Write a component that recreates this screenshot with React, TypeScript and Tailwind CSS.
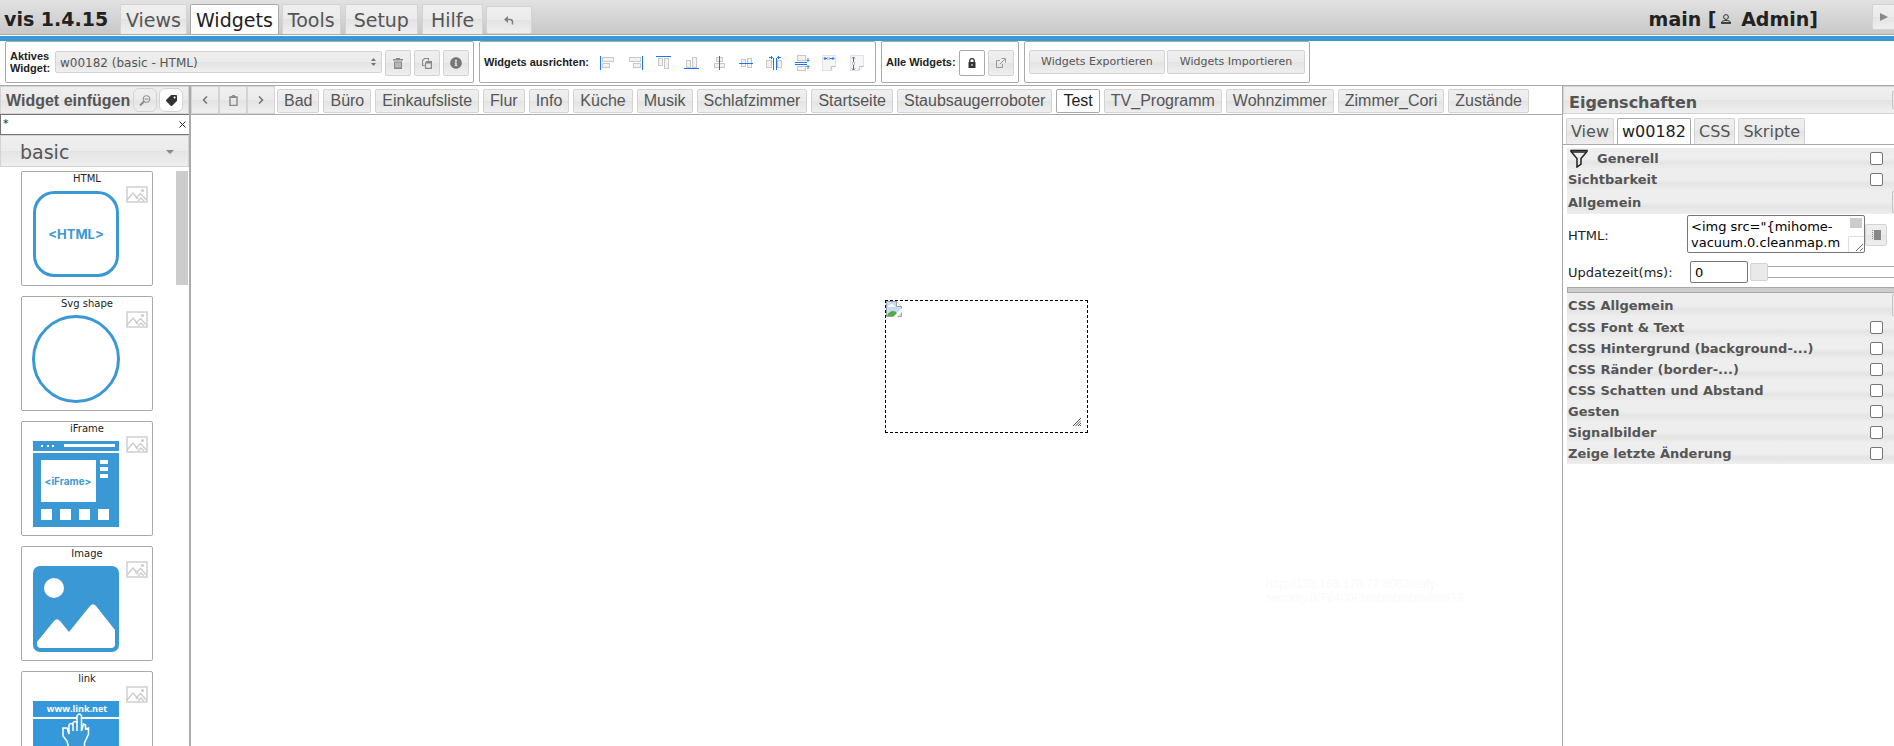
import React from 'react';
import { FaInfoCircle, FaTag } from 'react-icons/fa';

const glass = 'border border-[#d3d3d3] bg-[linear-gradient(#efefef,#ebebeb_50%,#e3e3e3_50%,#efefef)] text-[#555555]';
const active = 'border border-[#aaaaaa] bg-white text-[#212121]';

const viewNames = [
  'Bad', 'Büro', 'Einkaufsliste', 'Flur', 'Info', 'Küche', 'Musik', 'Schlafzimmer', 'Startseite',
  'Staubsaugerroboter', 'Test', 'TV_Programm', 'Wohnzimmer', 'Zimmer_Cori', 'Zustände',
];

const cssGroups = [
  'CSS Font & Text', 'CSS Hintergrund (background-...)', 'CSS Ränder (border-...)',
  'CSS Schatten und Abstand', 'Gesten', 'Signalbilder', 'Zeige letzte Änderung',
];

/* Toolbar icons */
const UndoIcon = () => (
  <svg width="10" height="9" viewBox="0 0 10 9" fill="none" stroke="#808080" strokeWidth="1.5">
    <path d="M3.5 3.5H6a2.5 2.5 0 0 1 2.5 2.5v2.5" />
    <path d="M4 0 0 3.5 4 7z" fill="#808080" stroke="none" />
  </svg>
);

const TrashIcon = () => (
  <svg width="10" height="11" viewBox="0 0 10 11" fill="#888888">
    <path d="M0 1h3V0h4v1h3v1.5H0z" />
    <path fillRule="evenodd" d="M1 3.5h8V11H1zM2.5 4.5v5h1v-5zm2 0v5h1v-5zm2 0v5h1v-5z" />
  </svg>
);

const CopyIcon = () => (
  <svg width="10" height="11" viewBox="0 0 10 11" fill="none" stroke="#888888" strokeWidth="1.2">
    <path d="M2.5 7.5h-2v-5l2-2h4v2" />
    <path d="M3.5 5.5 5 3.5h4.4v6.9H3.5z" />
    <path d="M3.5 4.5h6" strokeWidth="2" />
  </svg>
);

const ClipboardIcon = () => (
  <svg width="9" height="11" viewBox="0 0 9 11" fill="none" stroke="#888888">
    <path d="M1 2h7v8.4H1z" strokeWidth="1.4" />
    <path d="M2.5 2.5v-1h1v-1h2v1h1v1z" fill="#888888" />
  </svg>
);

const Chevron = ({ right }: { right?: boolean }) => (
  <svg width="6" height="8" viewBox="0 0 6 8" fill="none" stroke="#777777" strokeWidth="1.6">
    <path d={right ? 'M1 .5 4.5 4 1 7.5' : 'M5 .5 1.5 4 5 7.5'} />
  </svg>
);

const ZoomIcon = () => (
  <svg width="12" height="11" viewBox="0 0 12 11" fill="none" stroke="#888888">
    <circle cx="7.5" cy="4" r="3.4" />
    <path d="M5.5 4h4" />
    <path d="m5 6.5-4 4" strokeWidth="1.8" />
  </svg>
);

const LockIcon = () => (
  <svg width="8" height="10" viewBox="0 0 8 10">
    <path d="M1.8 5V2.8a2.2 2.2 0 0 1 4.4 0V5" fill="none" stroke="#333333" strokeWidth="1.4" />
    <path fillRule="evenodd" d="M.5 4h7v6h-7zM3.5 6v2h1V6z" fill="#333333" />
  </svg>
);

const ExternalIcon = () => (
  <svg width="10" height="10" viewBox="0 0 10 10" fill="none" stroke="#999999">
    <path d="M4 2.5H.5v7h6V6" />
    <path d="M4 6 9 1M5.5.5h4v4" />
  </svg>
);

const PersonIcon = () => (
  <svg width="10" height="10" viewBox="0 0 10 10" fill="none" stroke="#333333">
    <circle cx="5" cy="3" r="2.4" />
    <path d="M.5 9c0-2 2-2.5 4.5-2.5S9.5 7 9.5 9z" />
    <path d="M0 9h10" strokeWidth="1.6" />
  </svg>
);

const grey = { fill: '#f2f2f2', stroke: '#c8c8c8' };
const blue = { stroke: '#1f74ea', fill: 'none' };

const alignIcons: { title: string; icon: React.ReactNode }[] = [
  { title: 'Links', icon: <><rect x="2.5" y="2.5" width="11" height="4" {...grey} /><rect x="2.5" y="8.5" width="7" height="4" {...grey} /><path d="M.5 1v14" {...blue} /></> },
  { title: 'Rechts', icon: <><rect x="1.5" y="2.5" width="11" height="4" {...grey} /><rect x="5.5" y="8.5" width="7" height="4" {...grey} /><path d="M14.5 1v14" {...blue} /></> },
  { title: 'Oben', icon: <><rect x="3.5" y="3.5" width="4" height="7" {...grey} /><rect x="9.5" y="3.5" width="4" height="10" {...grey} /><path d="M1 1.5h15" {...blue} /></> },
  { title: 'Unten', icon: <><rect x="3.5" y="5.5" width="4" height="7" {...grey} /><rect x="9.5" y="2.5" width="4" height="10" {...grey} /><path d="M1 13.5h15" {...blue} /></> },
  { title: 'Mitte horizontal', icon: <><rect x="5.5" y="2.5" width="6" height="4" {...grey} /><rect x="3.5" y="8.5" width="10" height="4" {...grey} /><path d="M8.5 1v14" {...blue} /></> },
  { title: 'Mitte vertikal', icon: <><rect x="3.5" y="4.5" width="4" height="7" {...grey} /><rect x="9.5" y="3.5" width="4" height="9" {...grey} /><path d="M1 8.5h14" {...blue} /></> },
  { title: 'Abstand horizontal', icon: <><rect x=".5" y="5.5" width="5" height="7" {...grey} /><rect x="11.5" y="5.5" width="4" height="7" {...grey} /><path d="M7.500 3v12M10.500 3v12M3 2.500h3.500M15 2.500h-3.500M5 1l1.500 1.500L5 4M13 1l-1.500 1.500L13 4" {...blue} /></> },
  { title: 'Abstand vertikal', icon: <><rect x="3.5" y=".5" width="8" height="5" {...grey} /><rect x="3.5" y="11.5" width="8" height="4" {...grey} /><path d="M1 7.5h12M1 9.5h12M14 3v3M14 14v-3M12.5 5 14 6.5 15.5 5M12.5 12l1.500-1.500 1.500 1.500" {...blue} /></> },
  { title: 'Gleiche Breite', icon: <><path d="M1.5.5h13v11l-4 4h-9z" fill="#f6f6f6" stroke="#e2e2e2" /><path d="m10 15.5.5-4h4" fill="white" stroke="#bbbbbb" /><path d="M3 3.5h3M9 3.5h4M4.5 2 3 3.500 4.5 5M11.5 2 13 3.5 11.5 5" {...blue} /><rect x="6.5" y="2.5" width="2" height="2" {...grey} /></> },
  { title: 'Gleiche Höhe', icon: <><path d="M1.5.5h13v11l-4 4h-9z" fill="#f6f6f6" stroke="#e2e2e2" /><path d="m10 15.5.5-4h4" fill="white" stroke="#bbbbbb" /><path d="M4.5 2v5M4.5 10v5M3 3.5 4.5 2 6 3.5M3 13.5 4.5 15 6 13.5" {...blue} /><rect x="3.5" y="7.5" width="2" height="2" {...grey} /></> },
];

/* Palette drawings */
const widgets: { name: string; drawing: React.ReactNode }[] = [
  {
    name: 'HTML',
    drawing: (
      <>
        <rect x="1.5" y="1.5" width="83" height="83" rx="20" fill="none" stroke="#3a98d5" strokeWidth="3" />
        <text x="43" y="48" textAnchor="middle" fontFamily="Inter, sans-serif" fontWeight="700" fontSize="13" fill="#3a98d5">&lt;HTML&gt;</text>
      </>
    ),
  },
  { name: 'Svg shape', drawing: <circle cx="43" cy="43" r="42.5" fill="none" stroke="#3a98d5" strokeWidth="3" /> },
  {
    name: 'iFrame',
    drawing: (
      <>
        <path d="M0 0h86v10H0zM0 12h86v74H0z" fill="#3a98d5" />
        <path d="M8 4h2v2H8zM14 4h2v2h-2zM19 4h2v2h-2zM31 3h51v3H31zM8 19h55v42H8zM67 19h8v4h-8zM67 26h8v4h-8zM67 33h8v4h-8zM8 68h11v11H8zM27 68h11v11H27zM46 68h11v11H46zM65 68h11v11H65z" fill="white" />
        <text x="35" y="44" textAnchor="middle" fontFamily="Inter, sans-serif" fontWeight="700" fontSize="10" fill="#3a98d5">&lt;iFrame&gt;</text>
      </>
    ),
  },
  {
    name: 'Image',
    drawing: (
      <>
        <rect width="86" height="86" rx="7" fill="#3a98d5" />
        <circle cx="21" cy="22" r="10" fill="white" />
        <path d="M4 76 21 55q3-3.5 6 0l9 11 21-26q3-3.500 6 0l19 24v14q0 4-4 4H8q-4 0-4-4z" fill="white" />
      </>
    ),
  },
  {
    name: 'link',
    drawing: (
      <>
        <path d="M0 0h86v16H0zM0 18h86v68H0z" fill="#3498db" />
        <text x="44" y="11" textAnchor="middle" fontFamily="'Open Sans', sans-serif" fontWeight="700" fontSize="9" fill="white">www.link.net</text>
        <path d="M36 48 34 40 30 35V27h4l2 6V24q2-3 4 0v6-8q2-3 4 0v8V15q2.5-4 4.5 0v15l2-7 2 1v4l3-1v6l-4 9v6z" fill="#3a98d5" stroke="white" strokeWidth="1.5" />
      </>
    ),
  },
];

const PreviewIcon = () => (
  <svg width="22" height="17" viewBox="0 0 22 17" fill="none" stroke="#cccccc">
    <rect x="1" y="1" width="20" height="15" strokeWidth="1.4" />
    <path d="m1 14 6-7 5 6M9.5 10.5l1.5 2.5M11 11l3.5-3.5 6 6.500M12 15l3-3 3 3" strokeWidth="1.4" />
    <circle cx="16.5" cy="4.5" r="1.6" fill="#cccccc" stroke="none" />
  </svg>
);

const TopTab = ({ label, selected }: { label: string; selected?: boolean }) => (
  <button className={`h-[30px] shrink-0 rounded-t-xs px-[5px] text-[19px] leading-6 ${selected ? active : glass} border-b-0`}>{label}</button>
);

const SquareButton = ({ label, selected, children }: { label: string; selected?: boolean; children: React.ReactNode }) => (
  <button aria-label={label} title={label} className={`mt-[2px] flex size-[26px] shrink-0 items-center justify-center rounded-xs ${selected ? active : glass}`}>
    {children}
  </button>
);

const rowBg = 'bg-[linear-gradient(#eeeeee_50%,#e4e4e4_70%,#eeeeee)]';

const GroupRow = ({ label, filter }: { label: string; filter?: boolean }) => (
  <label className={`flex h-[21px] items-center pr-[11px] pl-px ${rowBg}`}>
    {filter && (
      <svg className="mr-[9px] ml-[2px]" width="18" height="19" viewBox="0 0 18 19" fill="none" stroke="#222222" strokeWidth="1.5">
        <path d="M1 1.5h16v1l-6 7v5.5l-4 3V9.5l-6-7z" />
        <path d="M2 3h14" />
      </svg>
    )}
    <span className="flex-1 pt-px font-bold">{label}</span>
    <input type="checkbox" className="size-[13px] appearance-none rounded-xs border border-[#767676] bg-white" />
  </label>
);

const GroupHeader = ({ label }: { label: string }) => (
  <div className={`flex h-6 items-center justify-between pl-px font-bold ${rowBg}`}>
    <h3 className="pt-px">{label}</h3>
    <span className="h-[22px] w-[2px] rounded-l-xs border border-r-0 border-[#c5c5c5]" />
  </div>
);

const App: React.FC = () => {
  return (
    <div className="flex h-screen flex-col overflow-hidden bg-white font-['DejaVu_Sans',sans-serif] text-[13px] text-[#222222]">
      {/* Menu */}
      <header className="flex h-[35px] shrink-0 items-end border-b border-[#aaaaaa] bg-linear-to-b from-[#e2e2e2] to-[#c8c8c8] pl-1">
        <h1 className="w-[116px] shrink-0 pb-[3px] text-[19px] leading-6 font-bold">vis 1.4.15</h1>
        <nav className="flex items-end gap-[3px]">
          <TopTab label="Views" />
          <TopTab label="Widgets" selected />
          <TopTab label="Tools" />
          <button className={`ml-px h-[30px] rounded-t-xs border-b-0 px-2 text-[19px] leading-7 ${glass}`}>Setup</button>
          <button className={`ml-px h-[30px] rounded-t-xs border-b-0 px-2 text-[19px] leading-7 ${glass}`}>Hilfe</button>
          <button aria-label="Rückgängig" className={`flex h-7 w-[46px] items-center justify-center rounded-xs ${glass}`}>
            <UndoIcon />
          </button>
        </nav>
        <div className="ml-auto flex items-center self-start pt-[3px]">
          <span className="mr-[54px] flex items-center pt-1 text-[19px] leading-6 font-bold whitespace-pre">
            main [<span className="mx-1"><PersonIcon /></span> Admin]
          </span>
          <button aria-label="Ausführen" className={`flex h-[26px] w-[22px] items-center justify-center rounded-l-xs border-r-0 ${glass}`}>
            <svg width="8" height="8" viewBox="0 0 8 8"><path d="M0 0 8 4 0 8z" fill="#888888" /></svg>
          </button>
        </div>
      </header>
      <div className="mt-px h-[5px] shrink-0 bg-[#3a98d5]" />

      {/* Toolbar */}
      <div className="flex h-[44px] shrink-0 items-start gap-[5px] pl-[5px]">
        <div className="flex h-[42px] w-[469px] items-center gap-[3px] rounded-xs border border-[#aaaaaa] px-1">
          <label htmlFor="active-widget" className="w-[42px] shrink-0 font-['Liberation_Sans',sans-serif] text-[11px] leading-3 font-bold">Aktives Widget:</label>
          <div className="relative min-w-0 flex-1">
            <select id="active-widget" className={`block h-[22px] w-full appearance-none rounded-xs px-1 pt-px text-[12px] ${glass}`}>
              <option>w00182 (basic - HTML)</option>
            </select>
            <svg className="pointer-events-none absolute top-[7px] right-[6px]" width="5" height="8" viewBox="0 0 5 8" fill="#777777">
              <path d="M0 3 2.5 0 5 3zM0 5l2.5 3L5 5z" />
            </svg>
          </div>
          <SquareButton label="Löschen"><TrashIcon /></SquareButton>
          <SquareButton label="Kopieren"><CopyIcon /></SquareButton>
          <SquareButton label="Info"><FaInfoCircle size={12} color="#777777" /></SquareButton>
        </div>
        <div className="flex h-[42px] w-[397px] items-center rounded-xs border border-[#aaaaaa] px-1">
          <span className="w-[110px] shrink-0 font-['Liberation_Sans',sans-serif] text-[11px] font-bold whitespace-nowrap">Widgets ausrichten:</span>
          <div className="flex flex-1 justify-between pt-[2px] pr-[6px] pl-[6px]">
            {alignIcons.map(({ title, icon }) => (
              <button key={title} title={title} aria-label={title}>
                <svg width="16" height="16" viewBox="0 0 16 16">{icon}</svg>
              </button>
            ))}
          </div>
        </div>
        <div className="flex h-[42px] w-[138px] items-center gap-[3px] rounded-xs border border-[#aaaaaa] px-1">
          <span className="flex-1 font-['Liberation_Sans',sans-serif] text-[11px] font-bold whitespace-nowrap">Alle Widgets:</span>
          <SquareButton label="Sperren" selected><LockIcon /></SquareButton>
          <SquareButton label="Exportieren"><ExternalIcon /></SquareButton>
        </div>
        <div className="flex h-[42px] items-center gap-[2px] rounded-xs border border-[#aaaaaa] px-1">
          <button className={`h-6 rounded-xs px-[11px] pt-px text-[11px] ${glass}`}>Widgets Exportieren</button>
          <button className={`h-6 rounded-xs px-3 pt-px text-[11px] ${glass}`}>Widgets Importieren</button>
        </div>
      </div>

      <div className="flex min-h-0 flex-1 border-t border-[#aaaaaa]">
        {/* Widget palette */}
        <aside className="flex w-[191px] shrink-0 flex-col border-r-2 border-[#aaaaaa]">
          <div className={`flex h-7 shrink-0 items-center pl-[5px] ${glass}`}>
            <h2 className="w-[127px] shrink-0 pt-px font-['Liberation_Sans',sans-serif] text-[16px] font-bold whitespace-nowrap">Widget einfügen</h2>
            <button aria-label="Filter" className={`flex size-6 items-center justify-center rounded-md ${glass}`}><ZoomIcon /></button>
            <button aria-label="Typen" className="ml-[2px] flex size-6 items-center justify-center rounded-md border border-[#d3d3d3] bg-white">
              <FaTag size={11} color="#333333" className="-scale-x-100" />
            </button>
          </div>
          <div className="flex h-[21px] shrink-0 items-center border border-r-0 border-[#767676] pr-[3px]">
            <input aria-label="Suche" defaultValue="*" className="min-w-0 flex-1 px-[2px] text-[11px] outline-none" />
            <button aria-label="Leeren">
              <svg width="7" height="7" viewBox="0 0 7 7" stroke="#222222"><path d="m.5.5 6 6m0-6-6 6" /></svg>
            </button>
          </div>
          <button className={`flex h-8 shrink-0 items-center justify-between pt-[2px] pr-[14px] pl-[19px] text-[19px] ${glass}`}>
            basic
            <svg width="8" height="4" viewBox="0 0 8 4"><path d="M0 0h8L4 4z" fill="#888888" /></svg>
          </button>
          <div className="flex min-h-0 flex-1 justify-between pt-1 pr-px pl-[21px]">
            <ul className="flex flex-col gap-[10px] overflow-hidden">
              {widgets.map(({ name, drawing }) => (
                <li key={name} className="h-[115px] w-[132px] shrink-0 rounded-xs border border-[#aaaaaa]">
                  <p className="h-[14px] text-center text-[10px] leading-[14px]">{name}</p>
                  <div className="flex justify-between pr-1 pl-[11px]">
                    <svg className="mt-[5px] overflow-visible" width="86" height="86" viewBox={name === 'link' ? '0 -10 86 86' : '0 0 86 86'}>{drawing}</svg>
                    <PreviewIcon />
                  </div>
                </li>
              ))}
            </ul>
            <div className="h-[114px] w-3 bg-[#cccccc]" />
          </div>
        </aside>

        {/* View tabs and canvas */}
        <main className="flex min-w-0 flex-1 flex-col">
          <div className="flex h-[29px] shrink-0 items-center border-b border-[#aaaaaa] font-['Liberation_Sans',sans-serif] text-[16px]">
            <button aria-label="Zurück" className={`flex h-7 w-7 shrink-0 items-center justify-center ${glass}`}><Chevron /></button>
            <button aria-label="Ansichten" className={`flex h-7 w-7 shrink-0 items-center justify-center ${glass}`}><ClipboardIcon /></button>
            <button aria-label="Weiter" className={`flex h-7 w-7 shrink-0 items-center justify-center ${glass}`}><Chevron right /></button>
            <div className="flex gap-1 pt-px pl-[2px]">
              {viewNames.map((name) => (
                <button key={name} className={`h-6 rounded-xs px-[6px] leading-[22px] ${name === 'Test' ? active : glass}`}>{name}</button>
              ))}
            </div>
          </div>
          <div className="relative flex-1 overflow-hidden">
            <div className="absolute top-[185px] left-[694px] h-[133px] w-[203px] border border-dashed border-black">
              <svg width="16" height="16" viewBox="0 0 16 16">
                <path d="M.5.5h10l5 5v10H.5z" fill="#c9dcf7" stroke="#a0a0a0" />
                <path d="M10.5.5v5h5" fill="white" stroke="#a0a0a0" />
                <path d="M2 6q0-2 2-2 1.5-2 3 0 2 0 2 2z" fill="white" />
                <path d="M1 15q2-5 6-5t5 5z" fill="#4cae3f" />
                <path d="M16 7 7 16h4l5-5z" fill="white" />
              </svg>
              <svg className="absolute right-[6px] bottom-[6px]" width="8" height="8" viewBox="0 0 8 8" stroke="#222222" strokeWidth=".8">
                <path d="m0 8 8-8M2.500 8 8 2.500M5 8l3-3M7 8l1-1" />
              </svg>
            </div>
            <p className="absolute top-[462px] left-[1075px] font-['Liberation_Sans',sans-serif] text-[12px] leading-[14px] text-[#fafafa]">
              http://192.168.178.77:8082/eufy-<br />security.0/T8400Pblablablabla/live/T8
            </p>
          </div>
        </main>

        {/* Properties */}
        <aside className="flex w-[332px] shrink-0 flex-col overflow-hidden border-l border-[#aaaaaa] text-[#555555]">
          <div className={`flex h-7 shrink-0 items-center justify-between border-r-0 pl-[5px] ${glass}`}>
            <h2 className="pt-[5px] text-[16px] leading-5 font-bold">Eigenschaften</h2>
            <span className="h-[18px] w-[2px] rounded-l-xs border border-r-0 border-[#c5c5c5]" />
          </div>
          <div className="flex h-[31px] shrink-0 items-end gap-[3px] border-b border-[#aaaaaa] pl-[3px] text-[16px]">
            {['View', 'w00182', 'CSS', 'Skripte'].map((tab) => (
              <button key={tab} className={`h-[26px] rounded-t-xs border-b-0 px-1 leading-6 ${tab === 'w00182' ? active : glass}`}>{tab}</button>
            ))}
          </div>
          <div className="pt-[3px] pl-1">
            <GroupRow label="Generell" filter />
            <GroupRow label="Sichtbarkeit" />
            <GroupHeader label="Allgemein" />
            <div className="flex h-10 items-center pl-px text-[#222222]">
              <label htmlFor="html" className="w-[119px] pt-1">HTML:</label>
              <div className="relative">
                <textarea
                  id="html"
                  rows={2}
                  defaultValue={'<img src="{mihome-\nvacuum.0.cleanmap.m'}
                  className="block h-[38px] w-[178px] resize-none overflow-hidden rounded-xs border border-[#767676] px-[3px] pt-[3px] text-[13px] leading-4 whitespace-pre text-black"
                />
                <span className="absolute top-[3px] right-[3px] h-[10px] w-3 bg-[#cccccc]" />
                <svg className="absolute right-px bottom-px" width="16" height="16" viewBox="0 0 16 16" fill="none">
                  <path d="M.5 16V.5H16" stroke="#dddddd" />
                  <path d="m8 15 7-7m-3 7 3-3" stroke="#666666" />
                </svg>
              </div>
              <button aria-label="Bearbeiten" className={`mt-[2px] flex size-[22px] items-center justify-center rounded-xs ${glass}`}>
                <svg width="9" height="10" viewBox="0 0 9 10">
                  <path d="M2 0h7v10H2z" fill="#888888" />
                  <path d="M.5 0v10" stroke="#888888" strokeDasharray="1 1" />
                </svg>
              </button>
            </div>
            <div className="flex h-[33px] items-center pt-[3px] pl-px text-[#222222]">
              <label htmlFor="interval" className="w-[122px] shrink-0 pt-px">Updatezeit(ms):</label>
              <input id="interval" defaultValue="0" className="h-[22px] w-[58px] shrink-0 rounded-xs border border-[#767676] px-1 text-[13px] text-black" />
              <input
                type="range"
                aria-label="Updatezeit"
                defaultValue={0}
                className="ml-[2px] h-[18px] min-w-0 flex-1 appearance-none [&::-webkit-slider-runnable-track]:h-3 [&::-webkit-slider-runnable-track]:border-y [&::-webkit-slider-runnable-track]:border-[#aaaaaa] [&::-webkit-slider-thumb]:-mt-1 [&::-webkit-slider-thumb]:size-[18px] [&::-webkit-slider-thumb]:appearance-none [&::-webkit-slider-thumb]:rounded-xs [&::-webkit-slider-thumb]:border [&::-webkit-slider-thumb]:border-[#d3d3d3] [&::-webkit-slider-thumb]:bg-[#e9e9e9]"
              />
            </div>
            <div className="h-[6px] border border-r-0 border-[#aaaaaa] bg-[#cccccc]" />
            <GroupHeader label="CSS Allgemein" />
            {cssGroups.map((label) => (
              <GroupRow key={label} label={label} />
            ))}
          </div>
        </aside>
      </div>
    </div>
  );
};

export default App;
